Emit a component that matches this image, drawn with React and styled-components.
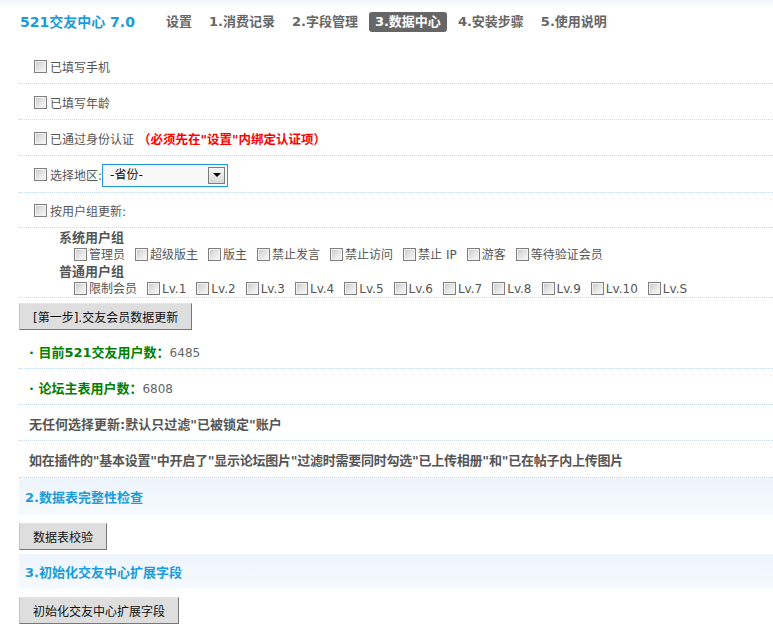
import React from "react"
import styled, { createGlobalStyle } from "styled-components"

const GlobalStyle = createGlobalStyle`
  html, body {
    margin: 0;
    padding: 0;
    background: #fff;
  }
  body {
    font-family: "DejaVu Sans", "Noto Sans CJK SC", sans-serif;
    font-size: 12px;
    color: #555;
  }
`

const Page = styled.div`
  width: 773px;
  overflow: hidden;
`

const Header = styled.div`
  height: 48px;
  display: flex;
  align-items: center;
  padding: 0 0 4px 20px;
  box-sizing: border-box;
  background: linear-gradient(#eef5fb 0, #fff 7px);
`

const Logo = styled.div`
  font-size: 14px;
  font-weight: bold;
  color: #1b9bd7;
  line-height: 20px;
  margin-right: 25px;
`

const Nav = styled.div`
  display: flex;
  gap: 5px;
`

const NavItem = styled.span`
  font-size: 13px;
  font-weight: bold;
  line-height: 20px;
  padding: 0 6px;
  border-radius: 3px;
  color: ${p => (p.active ? "#fff" : "#666")};
  background: ${p => (p.active ? "#666" : "transparent")};
`

const Body = styled.div`
  padding-left: 19px;
`

const Row = styled.div`
  display: flex;
  align-items: center;
  height: ${p => p.h || 36}px;
  box-sizing: border-box;
  padding: 4px 0 0 ${p => p.indent || 15}px;
  border-bottom: 1px dotted #c6dbeb;
  line-height: 18px;
`

const Check = styled.input.attrs({ type: "checkbox" })`
  appearance: none;
  width: 13px;
  height: 13px;
  margin: -3px 3px 0 0;
  flex: none;
  box-sizing: border-box;
  border: 1px solid #7f7f7f;
  background: linear-gradient(135deg, #c4c4c4 0%, #e2e2e2 45%, #fafafa 100%);
  box-shadow: inset 0 0 0 1px #f2f2f2;
`

const Label = styled.span`
  color: #555;
  font-size: 12px;
`

const Warn = styled.span`
  color: #f00;
  font-weight: bold;
  font-size: 12.5px;
  margin-left: 4px;
`

const Select = styled.div`
  width: 126px;
  height: 23px;
  box-sizing: border-box;
  border: 1px solid #1b9bd7;
  background: #f8f8f8;
  display: flex;
  align-items: center;
  justify-content: space-between;
  padding: 0 2px 0 7px;
  margin-top: -2px;
  color: #111;
`

const Arrow = styled.span`
  width: 17px;
  height: 17px;
  box-sizing: border-box;
  border: 1px solid #7d7d7d;
  background: linear-gradient(#f7f7f7, #d9d9d9);
  display: flex;
  align-items: center;
  justify-content: center;

  &::after {
    content: "";
    border-left: 4px solid transparent;
    border-right: 4px solid transparent;
    border-top: 4px solid #000;
  }
`

const Groups = styled.div`
  height: 70px;
  box-sizing: border-box;
  padding-top: 2px;
  border-bottom: 1px dotted #c6dbeb;
`

const GroupTitle = styled.div`
  font-size: 13px;
  font-weight: bold;
  color: #555;
  line-height: 16px;
  padding-left: 40px;
`

const GroupLine = styled.div`
  display: flex;
  align-items: center;
  height: 18px;
  padding-left: 55px;
  gap: 10px;
`

const GroupItem = styled.span`
  display: flex;
  align-items: center;
  color: #555;
  font-size: 12px;
  line-height: 18px;

  ${Check} {
    margin: -2px 2px 0 0;
  }
`

const ButtonRow = styled.div`
  padding: ${p => p.pad || "5px 0 3px"};
`

const Button = styled.button`
  height: 27px;
  padding: 0 13px;
  font-family: "DejaVu Sans", "Noto Sans CJK SC", sans-serif;
  font-size: 12px;
  color: #111;
  background: #dedede;
  border: 1px solid;
  border-color: #e4e4e4 #777 #777 #c4c4c4;
  border-radius: 0;
`

const Stat = styled.span`
  color: #008000;
  font-weight: bold;
  font-size: 13px;
`

const StatValue = styled.span`
  color: #666;
  font-size: 12px;
`

const Note = styled.span`
  color: #555;
  font-weight: bold;
  font-size: 13px;
  letter-spacing: ${p => (p.tight ? "-0.25px" : "0")};
`

const Section = styled.div`
  height: ${p => p.h || 37}px;
  display: flex;
  align-items: center;
  padding-left: 6px;
  background: linear-gradient(#edf4fc, #f6fafe);
  color: #1b9bd7;
  font-weight: bold;
  font-size: 13px;
`

const systemGroups = ["管理员", "超级版主", "版主", "禁止发言", "禁止访问", "禁止 IP", "游客", "等待验证会员"]
const normalGroups = ["限制会员", "Lv.1", "Lv.2", "Lv.3", "Lv.4", "Lv.5", "Lv.6", "Lv.7", "Lv.8", "Lv.9", "Lv.10", "Lv.S"]
const navs = ["设置", "1.消费记录", "2.字段管理", "3.数据中心", "4.安装步骤", "5.使用说明"]

const App = () => (
  <Page>
    <GlobalStyle />
    <Header>
      <Logo>521交友中心 7.0</Logo>
      <Nav>
        {navs.map(n => (
          <NavItem key={n} active={n === "3.数据中心"}>{n}</NavItem>
        ))}
      </Nav>
    </Header>
    <Body>
      <Row>
        <Check />
        <Label>已填写手机</Label>
      </Row>
      <Row>
        <Check />
        <Label>已填写年龄</Label>
      </Row>
      <Row>
        <Check />
        <Label>已通过身份认证</Label>
        <Warn>（必须先在"设置"内绑定认证项）</Warn>
      </Row>
      <Row h={37}>
        <Check />
        <Label>选择地区:</Label>
        <Select>
          <span>-省份-</span>
          <Arrow />
        </Select>
      </Row>
      <Row h={35}>
        <Check />
        <Label>按用户组更新:</Label>
      </Row>
      <Groups>
        <GroupTitle>系统用户组</GroupTitle>
        <GroupLine>
          {systemGroups.map(g => (
            <GroupItem key={g}>
              <Check />
              {g}
            </GroupItem>
          ))}
        </GroupLine>
        <GroupTitle>普通用户组</GroupTitle>
        <GroupLine>
          {normalGroups.map(g => (
            <GroupItem key={g}>
              <Check />
              {g}
            </GroupItem>
          ))}
        </GroupLine>
      </Groups>
      <ButtonRow>
        <Button>[第一步].交友会员数据更新</Button>
      </ButtonRow>
      <Row indent={10}>
        <Stat>· 目前521交友用户数：</Stat>
        <StatValue>6485</StatValue>
      </Row>
      <Row indent={10}>
        <Stat>· 论坛主表用户数：</Stat>
        <StatValue>6808</StatValue>
      </Row>
      <Row indent={10}>
        <Note>无任何选择更新:默认只过滤"已被锁定"账户</Note>
      </Row>
      <Row indent={10} h={37}>
        <Note tight>如在插件的"基本设置"中开启了"显示论坛图片"过滤时需要同时勾选"已上传相册"和"已在帖子内上传图片</Note>
      </Row>
      <Section>2.数据表完整性检查</Section>
      <ButtonRow pad="8px 0 4px">
        <Button>数据表校验</Button>
      </ButtonRow>
      <Section h={35}>3.初始化交友中心扩展字段</Section>
      <ButtonRow pad="8px 0 10px">
        <Button>初始化交友中心扩展字段</Button>
      </ButtonRow>
    </Body>
  </Page>
)

export default App
